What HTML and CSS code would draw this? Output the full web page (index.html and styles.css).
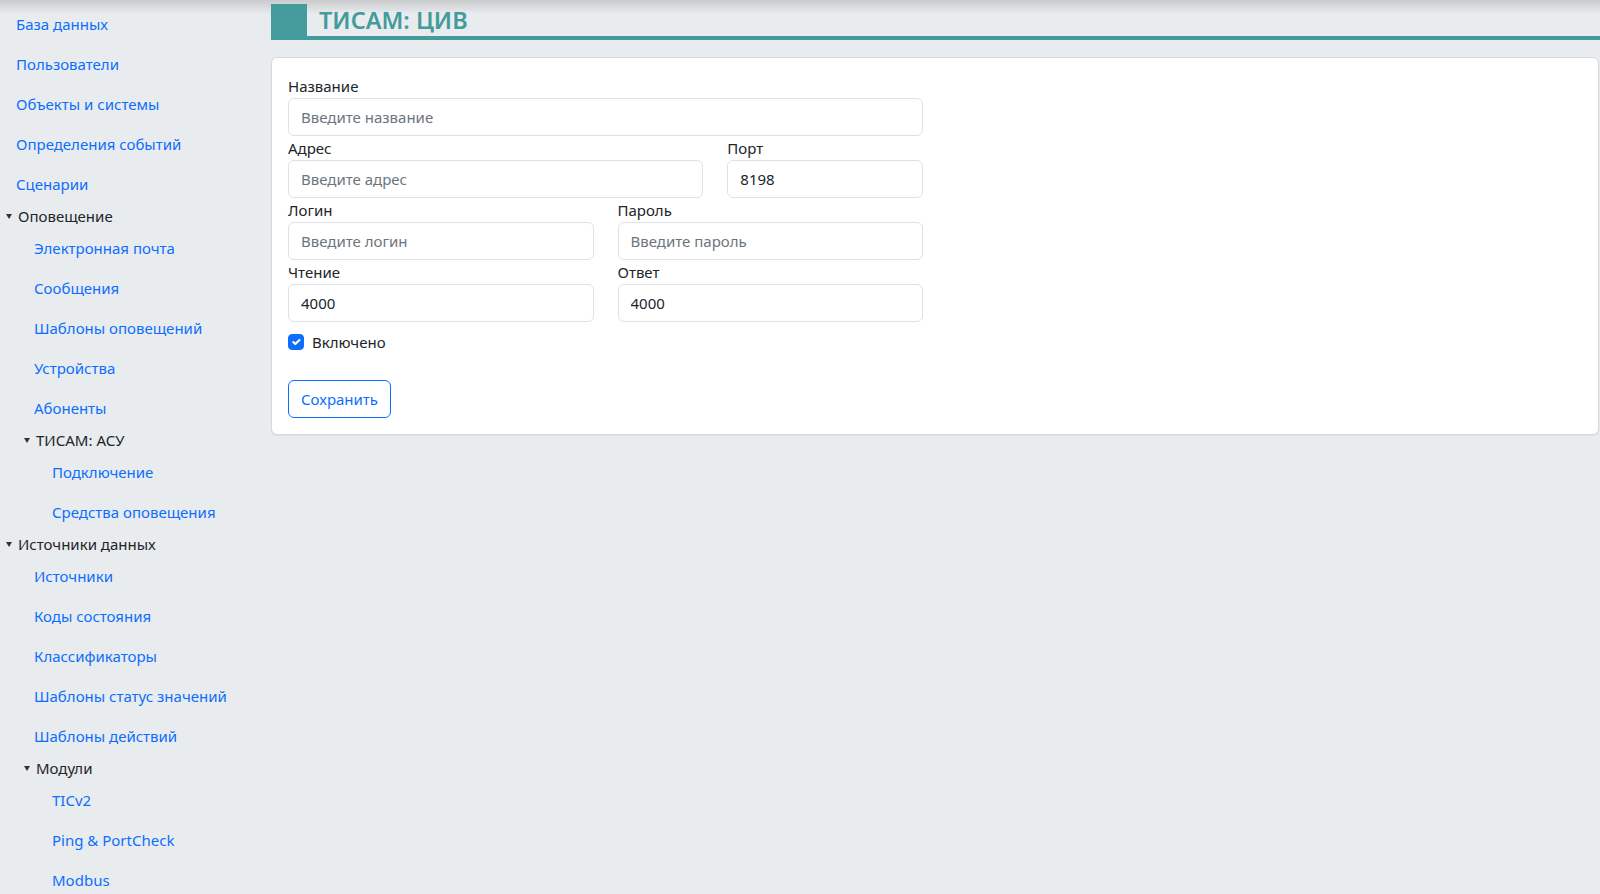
FILE: index.html
```html
<!DOCTYPE html>
<html lang="ru">

<head>
    <meta charset="UTF-8">
    <meta name="viewport" content="width=device-width, initial-scale=1.0">
    <title>ТИСАМ: ЦИВ</title>
    <link rel="stylesheet" href="styles.css">
</head>

<body>

    <div class="layout">
        <!-- Меню слева -->
        <aside class="sidebar">
            <nav class="side-nav">
                <a href="#">База данных</a>
                <a href="#">Пользователи</a>
                <a href="#">Объекты и системы</a>
                <a href="#">Определения событий</a>
                <a href="#">Сценарии</a>
                <details open>
                    <summary>Оповещение</summary>
                    <div class="group">
                        <a href="#">Электронная почта</a>
                        <a href="#">Сообщения</a>
                        <a href="#">Шаблоны оповещений</a>
                        <a href="#">Устройства</a>
                        <a href="#">Абоненты</a>
                        <details open>
                            <summary>ТИСАМ: АСУ</summary>
                            <div class="group">
                                <a href="#">Подключение</a>
                                <a href="#">Средства оповещения</a>
                            </div>
                        </details>
                    </div>
                </details>
                <details open>
                    <summary>Источники данных</summary>
                    <div class="group">
                        <a href="#">Источники</a>
                        <a href="#">Коды состояния</a>
                        <a href="#">Классификаторы</a>
                        <a href="#">Шаблоны статус значений</a>
                        <a href="#">Шаблоны действий</a>
                        <details open>
                            <summary>Модули</summary>
                            <div class="group">
                                <a href="#">TICv2</a>
                                <a href="#">Ping &amp; PortCheck</a>
                                <a href="#">Modbus</a>
                            </div>
                        </details>
                    </div>
                </details>
            </nav>
        </aside>

        <!-- Контент -->
        <main class="content">
            <h1 class="page-title">ТИСАМ: ЦИВ</h1>

            <div class="card">
                <div class="card-body">
                    <form class="settings-form">
                        <div class="field">
                            <label for="name">Название</label>
                            <input type="text" id="name" placeholder="Введите название">
                        </div>
                        <div class="row row-8-4">
                            <div class="field">
                                <label for="address">Адрес</label>
                                <input type="text" id="address" placeholder="Введите адрес">
                            </div>
                            <div class="field">
                                <label for="port">Порт</label>
                                <input type="text" id="port" value="8198">
                            </div>
                        </div>
                        <div class="row row-6-6">
                            <div class="field">
                                <label for="login">Логин</label>
                                <input type="text" id="login" placeholder="Введите логин">
                            </div>
                            <div class="field">
                                <label for="password">Пароль</label>
                                <input type="password" id="password" placeholder="Введите пароль">
                            </div>
                        </div>
                        <div class="row row-6-6">
                            <div class="field">
                                <label for="read">Чтение</label>
                                <input type="text" id="read" value="4000">
                            </div>
                            <div class="field">
                                <label for="answer">Ответ</label>
                                <input type="text" id="answer" value="4000">
                            </div>
                        </div>
                        <div class="form-check">
                            <input type="checkbox" id="enabled" checked>
                            <label for="enabled">Включено</label>
                        </div>
                        <button type="submit" class="btn-save">Сохранить</button>
                    </form>
                </div>
            </div>
        </main>
    </div>

</body>

</html>
```

FILE: styles.css
```css
body {
    font-family: 'Segoe UI', 'Noto Sans', sans-serif;
    font-size: 15px;
    line-height: 24px;
    color: #212529;
    margin: 0;
    background: linear-gradient(#c9cbcd, #e9ecef 14px) no-repeat, #e9ecef;
    min-height: 100vh;
}

.layout {
    display: grid;
    grid-template-columns: 271px 1fr;
}

/* Меню */
.side-nav {
    padding-top: 4px;
}

.side-nav a {
    display: block;
    padding: 8px 16px;
    color: #0d6efd;
    text-decoration: none;
}

.side-nav a:hover {
    text-decoration: underline;
}

.side-nav summary {
    list-style: none;
    cursor: pointer;
    display: flex;
    align-items: center;
}

.side-nav summary::-webkit-details-marker {
    display: none;
}

.side-nav summary::before {
    content: '';
    width: 0;
    height: 0;
    border-left: 3px solid transparent;
    border-right: 3px solid transparent;
    border-top: 5px solid #333;
    margin: 1px 6px 0 6px;
}

.side-nav .group {
    padding-left: 18px;
}

/* Заголовок */
.page-title {
    margin: 4px 0 17px;
    padding-left: 12px;
    border-left: 36px solid #439b9c;
    border-bottom: 4px solid #439b9c;
    font-size: 23.5px;
    line-height: 32px;
    font-weight: 600;
    color: #439b9c;
}

.card {
    background-color: #fff;
    border: 1px solid #d5d7d9;
    border-radius: 6px;
    margin-right: 1px;
    box-shadow: 0 1px 1px rgba(0, 0, 0, 0.06);
}

.card-body {
    padding: 16px;
    display: grid;
    grid-template-columns: 1fr 1fr;
    column-gap: 24px;
}

/* Форма */
.field label {
    display: block;
}

.field input {
    display: block;
    width: 100%;
    box-sizing: border-box;
    height: 38px;
    padding: 6px 12px;
    font: inherit;
    color: #212529;
    border: 1px solid #dee2e6;
    border-radius: 6px;
    background-color: #fff;
}

.field input::placeholder {
    color: #6c757d;
}

.row {
    display: grid;
    column-gap: 24px;
}

.row-8-4 {
    grid-template-columns: calc((100% + 24px) * 8 / 12 - 24px) 1fr;
}

.row-6-6 {
    grid-template-columns: 1fr 1fr;
}

.form-check {
    display: flex;
    align-items: center;
    gap: 8px;
    margin-top: 8px;
    margin-bottom: 2px;
}

.form-check input {
    appearance: none;
    width: 16px;
    height: 16px;
    margin: 0;
    border-radius: 4px;
    border: 1px solid #0d6efd;
    background-color: #0d6efd;
    background-image: url("data:image/svg+xml,%3csvg xmlns='http://www.w3.org/2000/svg' viewBox='0 0 20 20'%3e%3cpath fill='none' stroke='%23fff' stroke-linecap='round' stroke-linejoin='round' stroke-width='3' d='m6 10 3 3 6-6'/%3e%3c/svg%3e");
    background-size: 100% 100%;
}

.btn-save {
    justify-self: start;
    margin-top: 24px;
    height: 38px;
    padding: 6px 12px;
    font: inherit;
    color: #0d6efd;
    background-color: #fff;
    border: 1px solid #0d6efd;
    border-radius: 6px;
    cursor: pointer;
}

.btn-save:hover {
    background-color: #0d6efd;
    color: #fff;
}
```
